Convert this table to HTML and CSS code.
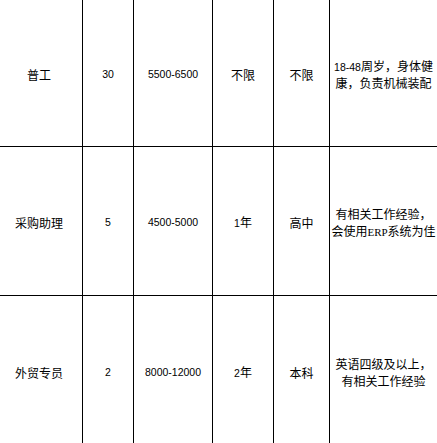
FILE: index.html
```html
<!DOCTYPE html>
<html lang="zh-CN">
<head>
<meta charset="utf-8">
<title>招聘岗位</title>
<link rel="stylesheet" href="styles.css">
</head>
<body>
<div class="sheet">
  <div class="cell first"><p class="txt">普工</p></div>
  <div class="cell"><p class="txt num">30</p></div>
  <div class="cell"><p class="txt num">5500-6500</p></div>
  <div class="cell"><p class="txt">不限</p></div>
  <div class="cell"><p class="txt">不限</p></div>
  <div class="cell last"><p class="txt"><span class="line"><span class="num">18-48</span>周岁，身体健</span><span class="line">康，负责机械装配</span></p></div>

  <div class="cell first"><p class="txt">采购助理</p></div>
  <div class="cell"><p class="txt num">5</p></div>
  <div class="cell"><p class="txt num">4500-5000</p></div>
  <div class="cell"><p class="txt"><span class="num">1</span>年</p></div>
  <div class="cell"><p class="txt">高中</p></div>
  <div class="cell last"><p class="txt"><span class="line">有相关工作经验，</span><span class="line">会使用<span class="erp">ERP</span>系统为佳</span></p></div>

  <div class="cell first"><p class="txt">外贸专员</p></div>
  <div class="cell"><p class="txt num">2</p></div>
  <div class="cell"><p class="txt num">8000-12000</p></div>
  <div class="cell"><p class="txt"><span class="num">2</span>年</p></div>
  <div class="cell"><p class="txt">本科</p></div>
  <div class="cell last"><p class="txt"><span class="line">英语四级及以上，</span><span class="line">有相关工作经验</span></p></div>
</div>
</body>
</html>
```

FILE: styles.css
```css
html, body {
  margin: 0;
  padding: 0;
  background: #ffffff;
  overflow: hidden;
}

body {
  width: 437px;
  height: 443px;
  font-family: "Noto Sans CJK SC", "Liberation Sans", sans-serif;
  font-size: 12px;
  color: #000000;
}

.sheet {
  display: grid;
  grid-template-columns: 83px 51px 79px 61px 56px minmax(0, 1fr);
  grid-template-rows: 147px 149px 150px;
  width: 437px;
}

.cell {
  box-sizing: border-box;
  border-right: 1px solid #000000;
  border-bottom: 1px solid #000000;
  display: flex;
  align-items: center;
  justify-content: center;
  padding-top: 3px;
  min-width: 0;
}

.txt {
  margin: 0;
  text-align: center;
  line-height: 15px;
  white-space: nowrap;
}

.line {
  display: block;
  height: 17px;
  line-height: 17px;
}

.cell.first {
  padding-right: 4px;
}

.cell.last {
  border-right: none;
  padding-top: 1px;
}

.sheet .cell:nth-child(n+13) {
  border-bottom: none;
}

.num {
  font-family: "Liberation Sans", sans-serif;
  font-size: 10.5px;
}

.erp {
  font-family: "Liberation Serif", serif;
  font-size: 11px;
}
```
